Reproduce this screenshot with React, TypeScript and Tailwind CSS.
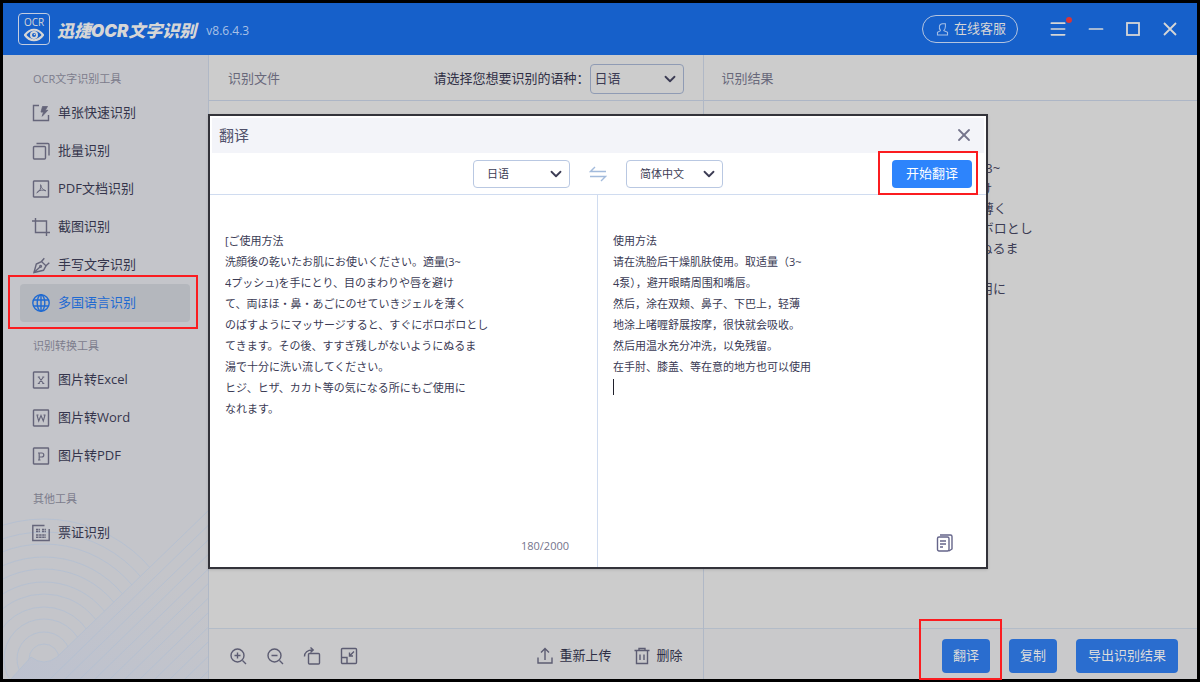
import { useState, type ReactNode } from "react";
import { ChevronDown, Menu, Minus, X } from "lucide-react";

type IconName =
    | "single" | "batch" | "pdfDoc" | "crop" | "pen" | "globe"
    | "excel" | "word" | "pdf" | "ticket";

interface NavItem {
    icon: IconName;
    label: string;
}

interface NavGroup {
    title: string;
    items: NavItem[];
}

const GROUPS: NavGroup[] = [
    {
        title: "OCR文字识别工具",
        items: [
            { icon: "single", label: "单张快速识别" },
            { icon: "batch", label: "批量识别" },
            { icon: "pdfDoc", label: "PDF文档识别" },
            { icon: "crop", label: "截图识别" },
            { icon: "pen", label: "手写文字识别" },
            { icon: "globe", label: "多国语言识别" },
        ],
    },
    {
        title: "识别转换工具",
        items: [
            { icon: "excel", label: "图片转Excel" },
            { icon: "word", label: "图片转Word" },
            { icon: "pdf", label: "图片转PDF" },
        ],
    },
    {
        title: "其他工具",
        items: [{ icon: "ticket", label: "票证识别" }],
    },
];

const SOURCE_TEXT = `[ご使用方法
洗顔後の乾いたお肌にお使いください。適量(3~
4プッシュ)を手にとり、目のまわりや唇を避け
て、両ほほ・鼻・あごにのせていきジェルを薄く
のばすようにマッサージすると、すぐにボロボロとし
てきます。その後、すすぎ残しがないようにぬるま
湯で十分に洗い流してください。
ヒジ、ヒザ、カカト等の気になる所にもご使用に
なれます。`;

const TRANSLATED_TEXT = `使用方法
请在洗脸后干燥肌肤使用。取适量（3~
4泵），避开眼睛周围和嘴唇。
然后，涂在双颊、鼻子、下巴上，轻薄
地涂上啫喱舒展按摩，很快就会吸收。
然后用温水充分冲洗，以免残留。
在手肘、膝盖、等在意的地方也可以使用`;

const ICON_PATHS: Record<IconName, ReactNode> = {
    single: (
        <>
            <path d="M7 1.5H1.5v15h15V11" />
            <path d="M10.5 2.5h5l-2.3 3.8h2.6l-5.6 6 1.3-4.2H9z" fill="currentColor" strokeWidth="0.8" />
        </>
    ),
    batch: (
        <>
            <rect x="1.5" y="4.5" width="12" height="12.5" rx="1" />
            <path d="M4.5 1.5h11.5a1 1 0 0 1 1 1v11" />
        </>
    ),
    pdfDoc: (
        <>
            <rect x="1.5" y="1" width="15" height="16" rx="0.5" />
            <path d="M8.5 4.5c1 3.5 1.5 4.5 5.5 6.5M8.8 5c.2 4-1 6.5-4.3 8M5.5 11.5c2.5-1.5 5-1.7 8-1" strokeWidth="1" />
        </>
    ),
    crop: (
        <>
            <path d="M0 3h14.5v15" />
            <path d="M3.5 0v14.5H18" />
        </>
    ),
    pen: (
        <>
            <path d="M2 16.5 4.3 8l5.2-2.5 4.5 4.3-2.5 4.5z" />
            <path d="m9.5 5.5 2.8-3.3M14 9.8l3.3-3M2 16.5l6-5.5" />
            <circle cx="8.6" cy="10.3" r="0.9" />
        </>
    ),
    globe: (
        <>
            <circle cx="9" cy="9" r="8.2" />
            <ellipse cx="9" cy="9" rx="3.8" ry="8.2" />
            <path d="M9 .8v16.4M1.5 6h15M1.5 12h15" />
        </>
    ),
    excel: (
        <>
            <rect x="1.5" y="1" width="15" height="16" rx="0.5" />
            <path d="m6.5 6 5 6.5M11.5 6l-5 6.5M5.8 6h2M10.3 6h2M5.8 12.5h2M10.3 12.5h2" strokeWidth="1.1" />
        </>
    ),
    word: (
        <>
            <rect x="1.5" y="1" width="15" height="16" rx="0.5" />
            <path d="m5 6 1.7 6L9 6.5l2.3 5.5L13 6M4.5 6h2M11.5 6h2" strokeWidth="1.1" />
        </>
    ),
    pdf: (
        <>
            <rect x="1.5" y="1" width="15" height="16" rx="0.5" />
            <path d="M7.2 13V6h2.6a2 2 0 0 1 0 4H7.2M6 13h2.5M6 6h1.5" strokeWidth="1.2" />
        </>
    ),
    ticket: (
        <>
            <path d="M12.5 1.5H.8v15h16.4V5" />
            <path d="M4 5.5h4M4 7.5h4M10 5.5h4M10 7.5h4M4 11h10M4 13.2h10" strokeWidth="1.4" strokeDasharray="2.5 .6" />
        </>
    ),
};

function Icon({ children, className = "size-[18px]" }: { children: ReactNode; className?: string }) {
    return (
        <svg
            viewBox="0 0 18 18"
            className={`shrink-0 ${className}`}
            fill="none"
            stroke="currentColor"
            strokeWidth="1.4"
            aria-hidden="true"
        >
            {children}
        </svg>
    );
}

function Highlight({ className }: { className: string }) {
    return <span className={`pointer-events-none absolute border-2 border-[#fb1c20] ${className}`} />;
}

function Logo() {
    return (
        <div className="flex size-8 shrink-0 flex-col items-center rounded-[4px] border border-[#c3cde0] pt-[2px] text-[#d6d6d6]">
            <span className="text-[10px] leading-[12px]">OCR</span>
            <svg viewBox="0 0 20 14" className="h-[14px] w-5" fill="none" stroke="currentColor" aria-hidden="true">
                <path d="M1 7c5-7 13-7 18 0-5 7-13 7-18 0z" strokeWidth="2.2" />
                <circle cx="10" cy="7" r="3" strokeWidth="2" />
                <circle cx="10.5" cy="6.5" r="0.8" fill="currentColor" stroke="none" />
            </svg>
        </div>
    );
}

function TitleBar() {
    return (
        <header className="flex h-[52px] shrink-0 items-center bg-[#1660ca] pl-[15px] pr-[18px] text-[#d6d6d6]">
            <Logo />
            <h1 className="ml-[7px] mt-[3px] whitespace-nowrap font-['Inter','Noto_Sans_CJK_SC',sans-serif] text-[17px] font-black italic leading-6">
                迅捷OCR文字识别
            </h1>
            <span className="ml-[10px] mt-1 text-xs text-[#a9c1e6]">v8.6.4.3</span>
            <button className="ml-auto flex h-7 items-center gap-[5px] rounded-full border border-[#b4c4df] pl-[13px] pr-[11px] text-[13px]">
                <Icon className="size-[13px] text-[#a9c1e6]">
                    <path d="M6.5 10.5C3 7 4.5 1 9 1h4v4c0 3-1 4.5-2.5 5.5" />
                    <path d="M6.5 10.5 2 13v3.5h14V13l-5.5-2.5" />
                </Icon>
                在线客服
            </button>
            <div className="ml-[30px] flex items-center gap-[19px]">
                <button aria-label="菜单" className="relative">
                    <Menu className="size-5" strokeWidth={2} />
                    <span className="absolute -right-1 -top-[2px] size-[6px] rounded-full bg-[#d93436]" />
                </button>
                <button aria-label="最小化">
                    <Minus className="size-[18px] scale-125" strokeWidth={1.8} />
                </button>
                <button aria-label="最大化">
                    <Icon>
                        <rect x="3" y="3" width="12" height="12" strokeWidth="1.8" />
                    </Icon>
                </button>
                <button aria-label="关闭">
                    <Icon>
                        <path d="m3 3 12 12M15 3 3 15" strokeWidth="1.8" />
                    </Icon>
                </button>
            </div>
        </header>
    );
}

function SidebarArt() {
    const radii = [140, 127, 115, 102, 90, 77, 65, 52, 40, 27, 15];
    const offsets = [15, 30, 45, 60, 75, 90, 105, 120, 135, 150, 165, 180];
    return (
        <svg
            viewBox="0 0 205 170"
            className="pointer-events-none absolute bottom-0 left-0 h-[170px] w-full"
            preserveAspectRatio="xMinYMax slice"
            fill="none"
            stroke="#b3bfd2"
            strokeWidth="0.8"
            aria-hidden="true"
        >
            <defs>
                <clipPath id="arcs">
                    <path d="M0 0h205v2L54 148q-13 10-26 0L8 170H0z" />
                </clipPath>
                <linearGradient id="band" x1="0" y1="1" x2="1" y2="0">
                    <stop offset="0" stopColor="#bcc1cf" />
                    <stop offset="0.7" stopColor="#c4c5ca" />
                </linearGradient>
            </defs>
            <path d="M205 2 54 148q-13 10-26 0L8 170h197z" fill="url(#band)" stroke="none" />
            <g clipPath="url(#arcs)">
                {radii.map((r) => (
                    <circle key={r} cx="41" cy="150" r={r} />
                ))}
            </g>
            <path d="M205 2 54 148q-13 10-26 0L8 170" />
            {offsets.map((o) => (
                <path key={o} d={`M${205 + o} 2 ${32 + o} 170`} />
            ))}
        </svg>
    );
}

function Sidebar() {
    const [active, setActive] = useState("多国语言识别");

    return (
        <aside className="relative w-[206px] shrink-0 border-r border-[#b0b8c6] bg-[#c4c5ca] pl-[17px] pr-[18px]">
            <SidebarArt />
            {GROUPS.map((group) => (
                <nav key={group.title} className="relative pt-2">
                    <h2 className="flex h-[31px] items-center pl-[13px] pt-[2px] text-[11px] text-[#7c7c8c]">
                        {group.title}
                    </h2>
                    {group.items.map(({ icon, label }) => {
                        const selected = label === active;
                        return (
                            <button
                                key={label}
                                onClick={() => setActive(label)}
                                className={`relative flex h-[38px] w-full items-center gap-2 rounded px-3 text-[13px] ${
                                    selected ? "bg-[#b4b7bd] text-[#1f6ad2]" : "text-[#35354c]"
                                }`}
                            >
                                <Icon className={selected ? "size-[18px]" : "size-[18px] text-[#65657a]"}>
                                    {ICON_PATHS[icon]}
                                </Icon>
                                {label}
                                {selected && <Highlight className="-bottom-[7px] -left-3 -right-2 -top-[9px]" />}
                            </button>
                        );
                    })}
                </nav>
            ))}
        </aside>
    );
}

interface LanguageSelectProps {
    id: string;
    label: string;
    options: string[];
    className: string;
}

function LanguageSelect({ id, label, options, className }: LanguageSelectProps) {
    return (
        <div className="relative">
            <select
                id={id}
                aria-label={label}
                className={`block appearance-none rounded-[4px] border outline-none ${className}`}
            >
                {options.map((o) => (
                    <option key={o}>{o}</option>
                ))}
            </select>
            <ChevronDown
                className="pointer-events-none absolute right-[5px] top-1/2 size-[18px] -translate-y-1/2 text-[#3c3c54]"
                strokeWidth={2.4}
            />
        </div>
    );
}

function FilePanel() {
    return (
        <section className="flex flex-1 flex-col border-r border-[#b0b8c6]">
            <div className="flex h-[46px] items-center border-b border-[#adb6c6] pl-[19px] pr-[19px] pt-[2px]">
                <h2 className="text-[13px] text-[#68687a]">识别文件</h2>
                <label htmlFor="source-lang" className="ml-auto text-[13px] text-[#2f2f45]">
                    请选择您想要识别的语种：
                </label>
                <LanguageSelect
                    id="source-lang"
                    label="识别语种"
                    options={["日语", "英语", "韩语"]}
                    className="h-[30px] w-[94px] border-[#8f9bb4] bg-transparent pl-1 text-[13px] text-[#3c3c54]"
                />
            </div>
            <div className="flex-1" />
            <footer className="flex h-[51px] items-center border-t border-[#b3bcc8] bg-[#c9c9cb] pl-5 pr-5 pt-[3px] text-[#5c5c72]">
                <div className="flex gap-[19px]">
                    <button aria-label="放大">
                        <Icon>
                            <circle cx="8.5" cy="8.5" r="6.5" />
                            <path d="m13.5 13.5 3.500 3.500M5.500 8.500h6M8.500 5.500v6" />
                        </Icon>
                    </button>
                    <button aria-label="缩小">
                        <Icon>
                            <circle cx="8.5" cy="8.5" r="6.5" />
                            <path d="m13.5 13.5 3.5 3.5M5.5 8.5h6" />
                        </Icon>
                    </button>
                    <button aria-label="旋转">
                        <Icon>
                            <rect x="5.5" y="6.5" width="11" height="10.5" rx="1" />
                            <path d="M1.5 9.5c0-4 3-6.5 8-6.5M7.5.5 10.2 3 7.5 5.5" />
                        </Icon>
                    </button>
                    <button aria-label="适应窗口">
                        <Icon>
                            <rect x="1.5" y="1.5" width="15" height="15" rx="1" />
                            <path d="M1.5 10.5H7v6M14 4.5 9.5 9M9.5 5.5V9H13" />
                        </Icon>
                    </button>
                </div>
                <button className="ml-auto flex items-center gap-[5px] text-[13px]">
                    <Icon>
                        <path d="M2 10.5V16h14v-5.5M9 13V2M5 5.5l4-4 4 4" />
                    </Icon>
                    <span className="text-[#2f2f45]">重新上传</span>
                </button>
                <button className="ml-[22px] flex items-center gap-[5px] text-[13px]">
                    <Icon>
                        <path d="M1.5 3.5h15M6 3V1.5h6V3M3.5 3.5v13h11v-13M7 7.5V13M11 7.5V13" />
                    </Icon>
                    <span className="text-[#2f2f45]">删除</span>
                </button>
            </footer>
        </section>
    );
}

function ResultPanel() {
    return (
        <section className="flex flex-1 flex-col">
            <div className="flex h-[46px] items-center border-b border-[#adb6c6] pl-[18px] pt-[2px]">
                <h2 className="text-[13px] text-[#68687a]">识别结果</h2>
            </div>
            <textarea
                lang="ja"
                aria-label="识别结果"
                defaultValue={SOURCE_TEXT}
                spellCheck={false}
                className="w-full flex-1 resize-none bg-transparent px-[18px] pt-[37px] font-['Open_Sans','Noto_Sans_CJK_JP',sans-serif] text-[13px] leading-5 text-[#3c3c54] outline-none"
            />
            <footer className="flex h-[51px] items-center justify-end gap-[19px] border-t border-[#b3bcc8] bg-[#c9c9cb] pr-[19px] pt-[3px] text-[13px] text-[#dcdcdc]">
                <button className="relative h-[34px] w-12 rounded-[4px] bg-[#2a6dcf]">
                    翻译
                    <Highlight className="-bottom-[7px] -left-[23px] -right-3 -top-5" />
                </button>
                <button className="h-[34px] w-12 rounded-[4px] bg-[#2a6dcf]">复制</button>
                <button className="h-[34px] rounded-[4px] bg-[#2a6dcf] px-3">导出识别结果</button>
            </footer>
        </section>
    );
}

function TranslateDialog() {
    const selectStyle = "h-7 w-[97px] border-[#b9c8e2] bg-white pl-[13px] text-[11px] text-[#3c3c54]";

    return (
        <div
            role="dialog"
            aria-labelledby="translate-title"
            className="flex h-[455px] w-[780px] flex-col border-2 border-[#33333a] bg-white text-[#3a3a54] shadow-sm"
        >
            <div className="mx-[2px] mt-[2px] flex h-[35px] items-center justify-between bg-[#f3f4f9] pl-[7px] pr-[10px]">
                <h2 id="translate-title" className="text-[15px] text-[#50506a]">翻译</h2>
                <button aria-label="关闭翻译" className="text-[#74748c]">
                    <X className="size-5" strokeWidth={2.2} />
                </button>
            </div>
            <div className="grid h-[42px] grid-cols-[1fr_auto_1fr] items-center border-b border-[#d0dcf0] pr-[14px] pt-[2px]">
                <span />
                <div className="ml-[14px] flex items-center gap-[19px]">
                    <LanguageSelect id="from-lang" label="源语言" options={["日语", "英语"]} className={selectStyle} />
                    <button aria-label="交换语言" className="text-[#a3bbdc]">
                        <Icon>
                            <path d="M17 6.5H1.5L6 2M1 11.5h15.500L12 16" />
                        </Icon>
                    </button>
                    <LanguageSelect id="to-lang" label="目标语言" options={["简体中文", "英语"]} className={selectStyle} />
                </div>
                <div className="flex justify-end">
                    <button className="relative h-7 rounded-[4px] bg-[#2d84fc] px-[14px] text-[13px] text-white">
                        开始翻译
                        <Highlight className="-bottom-[7px] -left-[14px] -right-[6px] -top-[9px]" />
                    </button>
                </div>
            </div>
            <div className="grid min-h-0 flex-1 grid-cols-2">
                <div className="flex flex-col border-r border-[#d0dcf0] pb-[13px] pl-[15px] pr-7 pt-[35px]">
                    <textarea
                        lang="ja"
                        aria-label="原文"
                        defaultValue={SOURCE_TEXT}
                        spellCheck={false}
                        className="w-full flex-1 resize-none font-['Open_Sans','Noto_Sans_CJK_JP',sans-serif] text-[11px] leading-[21px] outline-none"
                    />
                    <span className="self-end text-[11px] leading-4 text-[#74748c]">180/2000</span>
                </div>
                <div className="flex flex-col pb-[15px] pl-[15px] pr-8 pt-[35px]">
                    <div className="flex-1 whitespace-pre-line text-[11px] leading-[21px]">
                        {TRANSLATED_TEXT}
                        <div className="mt-[2px] h-4 w-px bg-[#20202c]" />
                    </div>
                    <button aria-label="复制译文" className="self-end text-[#65658a]">
                        <Icon>
                            <rect x="1.5" y="3" width="11.5" height="14" rx="1.5" />
                            <path d="M4 1h10.5A1.5 1.5 0 0 1 16 2.500V15l-3 2M4 7h6M4 10h6M4 13h3" />
                        </Icon>
                    </button>
                </div>
            </div>
        </div>
    );
}

export default function App() {
    return (
        <div
            lang="zh-CN"
            className="relative flex min-h-screen flex-col border-[3px] border-black bg-[#cccccc] font-['Open_Sans','Noto_Sans_CJK_SC',sans-serif]"
        >
            <TitleBar />
            <div className="flex flex-1">
                <Sidebar />
                <main className="flex min-w-0 flex-1">
                    <FilePanel />
                    <ResultPanel />
                </main>
            </div>
            <div className="absolute inset-0 flex items-center justify-center pr-1">
                <TranslateDialog />
            </div>
        </div>
    );
}
